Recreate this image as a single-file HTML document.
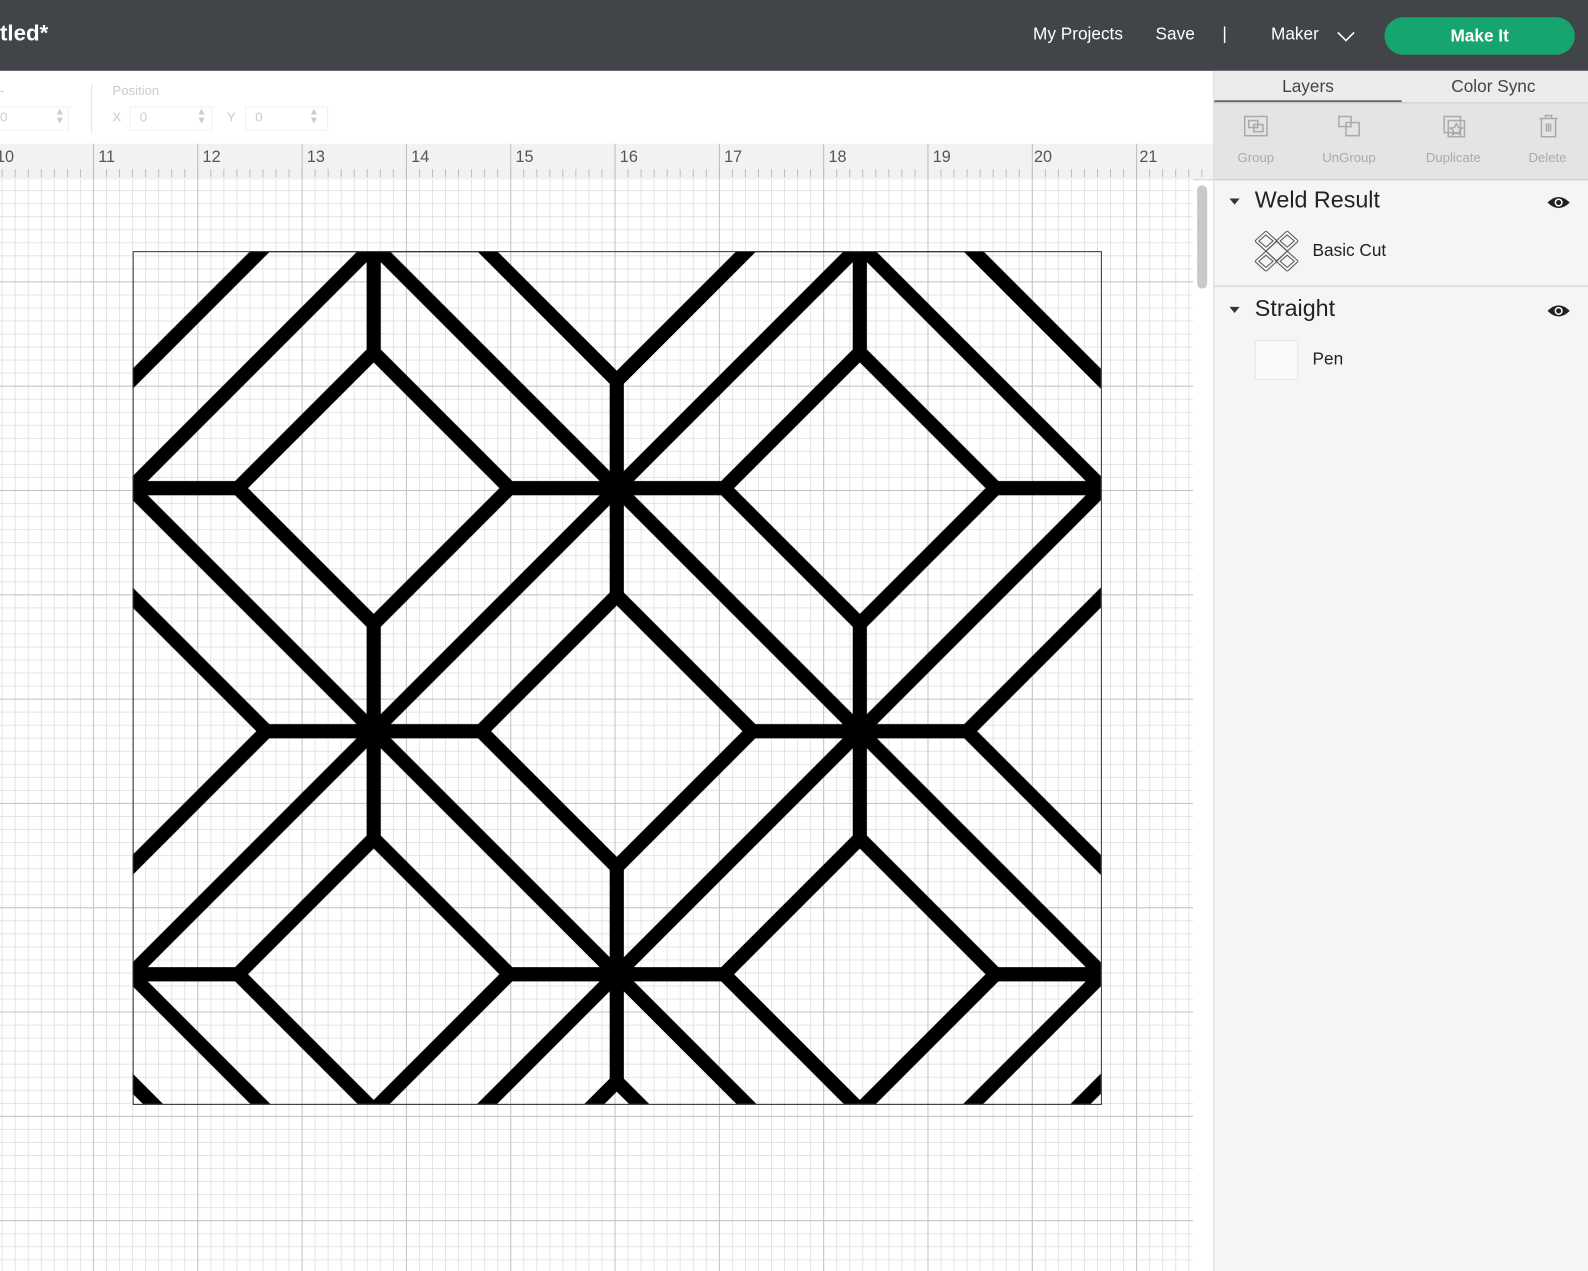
<!DOCTYPE html>
<html><head><meta charset="utf-8"><style>
html,body{margin:0;padding:0;width:1588px;height:1271px;overflow:hidden;background:#fff;font-family:"Liberation Sans",sans-serif}
#w{position:absolute;left:0;top:0;width:1568px;height:1255px;transform:scale(1.01276);transform-origin:0 0;overflow:hidden}
.a{position:absolute}
#hdr{left:0;top:0;width:1568px;height:70px;background:#414549;color:#fff}
#hdr span{position:absolute;font-size:17px;top:24px}
#btn{left:1367px;top:17px;width:188px;height:37px;border-radius:19px;background:#16a46f;color:#fff;font-weight:bold;font-size:17px;text-align:center;line-height:37px}
#tb{left:0;top:70px;width:1198px;height:72px;background:#fff}
#ruler{left:0;top:142px;width:1198px;height:35px;background-color:#f2f2f2;border-bottom:1px solid #d6d6d6;
background-image:linear-gradient(90deg,#bbb 0 1px,transparent 1px),linear-gradient(90deg,#bbb 0 1px,transparent 1px);
background-position:91.8px 0,91.8px 25px;background-size:103px 35px,12.875px 8px;background-repeat:repeat-x}
.rn{position:absolute;top:5px;font-size:16px;color:#555}
#cv{left:0;top:177px;width:1178px;height:1078px;background-color:#fff;
background-image:linear-gradient(90deg,#c4c4c4 0 1px,transparent 1px),linear-gradient(0deg,#c4c4c4 0 1px,transparent 1px),linear-gradient(90deg,#e4e4e4 0 1px,transparent 1px),linear-gradient(0deg,#e4e4e4 0 1px,transparent 1px);
background-size:103px 103px,103px 103px,12.875px 12.875px,12.875px 12.875px;
background-position:91.8px 0,0 101.8px,91.8px 0,0 101.8px}
#pn{left:1198px;top:70px;width:370px;height:1185px;background:#f5f5f5;border-left:1px solid #d8d8d8}
#tabs{left:0;top:0;width:370px;height:31px;background:#ececec}
#tools{left:0;top:31px;width:370px;height:75px;background:#e4e4e4;border-top:1px solid #ccc;border-bottom:1px solid #cfcfcf}
.tl{position:absolute;top:46px;font-size:13px;color:#aaa;text-align:center;width:90px}
.lh{position:absolute;font-size:23px;color:#222}
.ls{position:absolute;font-size:17px;color:#222}
.tri{position:absolute;width:0;height:0;border-left:5px solid transparent;border-right:5px solid transparent;border-top:6px solid #333}
.faint{position:absolute;color:#ccc;font-size:13px}
.inp{position:absolute;border:1px solid #f0f0f0;height:22px}
</style></head><body><div id="w">
<div id="hdr" class="a">
<span style="left:0;top:20px;font-size:22px;font-weight:bold">tled*</span>
<span style="left:1020px">My Projects</span>
<span style="left:1141px">Save</span>
<span style="left:1207px">|</span>
<span style="left:1255px">Maker</span>
<svg class="a" style="left:1320px;top:30px" width="18" height="12"><path d="M1 2 L9 10 L17 2" stroke="#fff" stroke-width="1.6" fill="none"/></svg>
<div id="btn" class="a">Make It</div>
</div>
<div id="tb" class="a">
<div class="faint" style="left:0;top:12px">-</div>
<div class="inp" style="left:-4px;top:35px;width:70px"></div>
<div class="faint" style="left:0;top:38px">0</div>
<div class="faint" style="left:54px;top:36px;font-size:10px;line-height:9px">▲<br>▼</div>
<div class="a" style="left:90px;top:13px;width:1px;height:48px;background:#e2e2e2"></div>
<div class="faint" style="left:111px;top:12px">Position</div>
<div class="faint" style="left:111px;top:38px">X</div>
<div class="inp" style="left:128px;top:35px;width:80px"></div>
<div class="faint" style="left:138px;top:38px">0</div>
<div class="faint" style="left:194px;top:36px;font-size:10px;line-height:9px">▲<br>▼</div>
<div class="faint" style="left:224px;top:38px">Y</div>
<div class="inp" style="left:242px;top:35px;width:80px"></div>
<div class="faint" style="left:252px;top:38px">0</div>
<div class="faint" style="left:305px;top:36px;font-size:10px;line-height:9px">▲<br>▼</div>
</div>
<div id="ruler" class="a">
<span class="rn" style="left:-4px">10</span><span class="rn" style="left:97px">11</span><span class="rn" style="left:200px">12</span><span class="rn" style="left:303px">13</span><span class="rn" style="left:406px">14</span><span class="rn" style="left:509px">15</span><span class="rn" style="left:612px">16</span><span class="rn" style="left:715px">17</span><span class="rn" style="left:818px">18</span><span class="rn" style="left:921px">19</span><span class="rn" style="left:1021px">20</span><span class="rn" style="left:1125px">21</span>
</div>
<div id="cv" class="a"></div>
<div class="a" style="left:1182px;top:183px;width:10px;height:102px;border-radius:5px;background:#c9c9c9"></div>
<svg class="a" style="left:0;top:0" width="1198" height="1255">
<defs>
<pattern id="p" patternUnits="userSpaceOnUse" x="369" y="242" width="480" height="480">
<g stroke="#000" stroke-width="14" fill="none" stroke-linecap="butt">
<line x1="-20" y1="-20" x2="500" y2="500"/>
<line x1="500" y1="-20" x2="-20" y2="500"/>
<line x1="-20" y1="20" x2="20" y2="-20"/>
<line x1="460" y1="500" x2="500" y2="460"/>
<line x1="460" y1="-20" x2="500" y2="20"/>
<line x1="-20" y1="460" x2="20" y2="500"/>
<polygon points="240,-134 374,0 240,134 106,0"/>
<polygon points="240,346 374,480 240,614 106,480"/>
<polygon points="0,106 134,240 0,374 -134,240"/>
<polygon points="480,106 614,240 480,374 346,240"/>
<path d="M-10 0H106M0 -10V106M490 0H374M480 -10V106M-10 480H106M0 490V374M490 480H374M480 490V374M134 240H346"/>
</g>
</pattern>
<pattern id="p2" patternUnits="userSpaceOnUse" x="369" y="242" width="480" height="480">
<path d="M240 134V346" stroke="#000" stroke-width="14"/>
</pattern>
</defs>
<rect x="131" y="248" width="956" height="842" fill="url(#p)"/>
<rect x="142" y="248" width="934" height="842" fill="url(#p2)"/>
<rect x="131.5" y="248.5" width="956" height="842" fill="none" stroke="#333" stroke-width="1"/>
</svg>
<div id="pn" class="a">
<div id="tabs" class="a">
<div class="a" style="left:67px;top:6px;font-size:17px;color:#444">Layers</div>
<div class="a" style="left:234px;top:6px;font-size:17px;color:#444">Color Sync</div>
<div class="a" style="left:0;top:29px;width:185px;height:2px;background:#666"></div>
</div>
<div id="tools" class="a">
<svg class="a" style="left:27px;top:10px" width="28" height="26"><g stroke="#aaa" fill="none" stroke-width="1.5"><rect x="3" y="3" width="22" height="19"/><rect x="7" y="7" width="9" height="7"/><rect x="12" y="11" width="9" height="7"/></g></svg>
<svg class="a" style="left:120px;top:10px" width="28" height="26"><g stroke="#aaa" fill="none" stroke-width="1.5"><rect x="3" y="3" width="12" height="10"/><rect x="10" y="9" width="13" height="13"/></g></svg>
<svg class="a" style="left:224px;top:10px" width="28" height="26"><g stroke="#aaa" fill="none" stroke-width="1.5"><rect x="3" y="3" width="16" height="16"/><rect x="7" y="7" width="16" height="16"/><path d="M15 10l2 4 4 .5-3 2.5 1 4-4-2-4 2 1-4-3-2.5 4-.5z"/></g></svg>
<svg class="a" style="left:318px;top:10px" width="24" height="26"><g stroke="#aaa" fill="none" stroke-width="1.5"><path d="M3 5H21M9 5V2H15V5M5 5V23H19V5M10 10V18M12 10V18M14 10V18"/></g></svg>
<div class="tl" style="left:-4px">Group</div>
<div class="tl" style="left:88px">UnGroup</div>
<div class="tl" style="left:191px">Duplicate</div>
<div class="tl" style="left:284px">Delete</div>
</div>
<div class="tri" style="left:15px;top:126px"></div>
<div class="lh" style="left:40px;top:114px">Weld Result</div>
<svg class="a" style="left:328px;top:122px" width="24" height="16"><path d="M1 8Q12 -3 23 8Q12 19 1 8Z" fill="#222"/><circle cx="12" cy="8" r="4" fill="#fff"/><circle cx="12" cy="8" r="2.5" fill="#222"/></svg>
<svg class="a" style="left:40px;top:158px" width="43" height="40" viewBox="0 0 43 40">
<g stroke="#555" stroke-width="1" fill="none">
<polygon points="11,0 22,10 11,20 0,10"/><polygon points="32,0 43,10 32,20 21,10"/>
<polygon points="11,20 22,30 11,40 0,30"/><polygon points="32,20 43,30 32,40 21,30"/>
<polygon points="21.5,10 32,20 21.5,30 11,20"/>
<polygon points="11,4 18,10 11,16 4,10"/><polygon points="32,4 39,10 32,16 25,10"/>
<polygon points="11,24 18,30 11,36 4,30"/><polygon points="32,24 39,30 32,36 25,30"/>
</g></svg>
<div class="ls" style="left:97px;top:168px">Basic Cut</div>
<div class="a" style="left:0;top:212px;width:370px;height:1px;background:#ccc"></div>
<div class="tri" style="left:15px;top:233px"></div>
<div class="lh" style="left:40px;top:221px">Straight</div>
<svg class="a" style="left:328px;top:229px" width="24" height="16"><path d="M1 8Q12 -3 23 8Q12 19 1 8Z" fill="#222"/><circle cx="12" cy="8" r="4" fill="#fff"/><circle cx="12" cy="8" r="2.5" fill="#222"/></svg>
<div class="a" style="left:40px;top:266px;width:41px;height:37px;background:#fafafa;border:1px solid #e6e6e6"></div>
<div class="ls" style="left:97px;top:275px">Pen</div>
</div>
</div></body></html>
